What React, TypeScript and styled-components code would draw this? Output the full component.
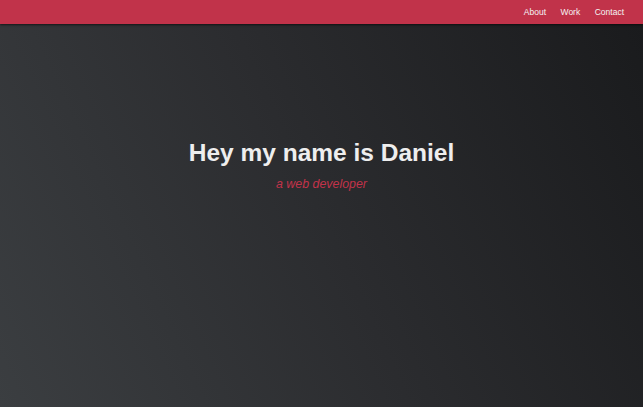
import React from "react";
import styled, { createGlobalStyle } from "styled-components";

const Global = createGlobalStyle`
  html, body { margin: 0; padding: 0; height: 100%; }
  body { font-family: "Liberation Sans", Arial, sans-serif; background: #2a2c2f; }
  #root { min-height: 100vh; display: flex; flex-direction: column; }
`;

const Header = styled.header`
  height: 24px;
  background: #c1334a;
  display: flex;
  justify-content: flex-end;
  align-items: center;
  padding-right: 19px;
  gap: 14.5px;
  box-shadow: 0 1px 2px rgba(0, 0, 0, 0.6);
  position: relative;
  z-index: 1;
`;

const NavLink = styled.a`
  color: #f4f4f4;
  font-size: 8.5px;
  text-decoration: none;
  line-height: 1;
`;

const Hero = styled.main`
  flex: 1;
  display: flex;
  flex-direction: column;
  align-items: center;
  background: linear-gradient(65deg, #3b3e41 0%, #2b2c2f 50%, #1a1b1d 100%);
  padding-top: 115px;
`;

const Title = styled.h1`
  margin: 0;
  color: #eeeeee;
  font-size: 24.5px;
  font-weight: 700;
  line-height: 28px;
`;

const Subtitle = styled.p`
  margin: 10px 0 0;
  color: #c1334a;
  font-size: 12.4px;
  font-style: italic;
  line-height: 14px;
`;

export default function App() {
  return (
    <>
      <Global />
      <Header>
        <NavLink href="#">About</NavLink>
        <NavLink href="#">Work</NavLink>
        <NavLink href="#">Contact</NavLink>
      </Header>
      <Hero>
        <Title>Hey my name is Daniel</Title>
        <Subtitle>a web developer</Subtitle>
      </Hero>
    </>
  );
}
